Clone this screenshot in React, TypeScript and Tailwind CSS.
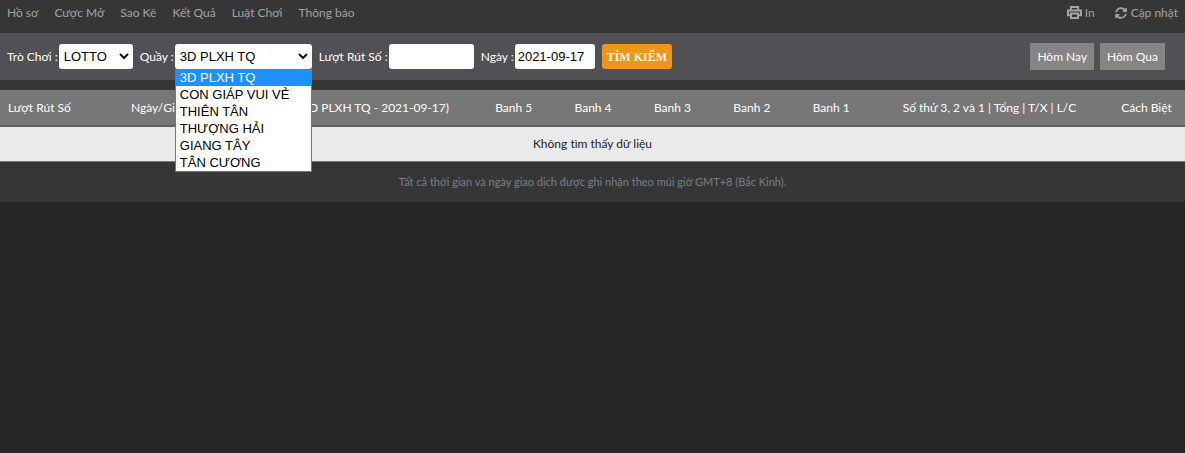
import React, { useState } from 'react';
import { FaSyncAlt } from 'react-icons/fa';
import { clsx } from 'clsx';

const navLinks = ['Hồ sơ', 'Cược Mở', 'Sao Kê', 'Kết Quả', 'Luật Chơi', 'Thông báo'];
const counters = ['3D PLXH TQ', 'CON GIÁP VUI VẺ', 'THIÊN TÂN', 'THƯỢNG HẢI', 'GIANG TÂY', 'TÂN CƯƠNG'];
const balls = ['Banh 5', 'Banh 4', 'Banh 3', 'Banh 2', 'Banh 1'];

const fieldClass = 'rounded-[3px] bg-white text-black font-["Liberation_Sans",sans-serif] text-[13px] h-[25px]';

const Chevron = () => (
  <svg viewBox="0 0 10 7" className="pointer-events-none absolute right-1 top-[9px] h-[7px] w-[10px]" fill="none" stroke="#111" strokeWidth="2">
    <path d="M1 1l4 4 4-4" />
  </svg>
);

const PrinterIcon = () => (
  <svg viewBox="0 0 15 13" className="h-[13px] w-[15px]" fill="none" stroke="currentColor" strokeWidth="2">
    <path d="M3.9 4V1h7.2v3" />
    <path d="M3.5 9.3H1V4.4h13v4.9h-2.5" />
    <path d="M4 7.5h7V12H4z" />
  </svg>
);

const TopNav = () => (
  <nav className="flex h-[33px] items-center justify-between px-[7px] pb-2 text-[#a3a3a3]">
    <div className="flex gap-4">
      {navLinks.map((link) => (
        <a key={link} href="#">{link}</a>
      ))}
    </div>
    <div className="flex gap-5">
      <button className="flex items-center gap-[3px]">
        <PrinterIcon />
        In
      </button>
      <button className="flex items-center gap-1">
        <FaSyncAlt className="h-3 w-3" />
        Cập nhật
      </button>
    </div>
  </nav>
);

const Filters = () => {
  const [counter, setCounter] = useState(counters[0]);
  const [open, setOpen] = useState(true);
  const [date, setDate] = useState('2021-09-17');

  return (
    <div className="flex min-h-[47px] items-center justify-between bg-[#505055] px-[7px] text-white">
      <div className="flex items-center gap-[7px]">
        <div className="flex items-center gap-px">
          <label htmlFor="game">Trò Chơi :</label>
          <div className="relative">
            <select id="game" className={clsx(fieldClass, 'w-[74px] appearance-none pl-[5px]')}>
              <option>LOTTO</option>
            </select>
            <Chevron />
          </div>
        </div>

        <div className="flex items-center gap-px">
          <label htmlFor="counter">Quầy :</label>
          <div className="relative">
            <select
              id="counter"
              value={counter}
              onChange={(e) => setCounter(e.target.value)}
              onClick={() => setOpen(!open)}
              className={clsx(fieldClass, 'w-[137px] appearance-none pl-[5px]')}
            >
              {counters.map((name) => (
                <option key={name}>{name}</option>
              ))}
            </select>
            <Chevron />
            {open && (
              <ul role="listbox" aria-label="Quầy" className="absolute top-full left-0 z-10 w-full border border-t-0 border-[#777] bg-white font-['Liberation_Sans',sans-serif] text-[13px] text-black">
                {counters.map((name) => (
                  <li
                    key={name}
                    role="option"
                    aria-selected={name === counter}
                    onClick={() => { setCounter(name); setOpen(false); }}
                    className={clsx('px-1 leading-[17px]', name === counter && 'bg-[#1e90ff] text-white')}
                  >
                    {name}
                  </li>
                ))}
              </ul>
            )}
          </div>
        </div>

        <div className="flex items-center gap-px">
          <label htmlFor="round">Lượt Rút Số :</label>
          <input id="round" type="text" className={clsx(fieldClass, 'w-[85px] px-1')} />
        </div>

        <div className="flex items-center gap-px">
          <label htmlFor="date">Ngày :</label>
          <input id="date" type="text" value={date} onChange={(e) => setDate(e.target.value)} className={clsx(fieldClass, 'w-20 px-[3px]')} />
        </div>

        <button className="h-[25px] rounded-[3px] bg-[#ee961c] px-[5px] font-['Liberation_Serif',serif] font-bold text-[#fff3d6]">
          TÌM KIẾM
        </button>
      </div>

      <div className="flex gap-1.5 pr-[13px]">
        <button className="h-[27px] bg-[#858585] px-[7px]">Hôm Nay</button>
        <button className="h-[27px] bg-[#858585] px-[7px]">Hôm Qua</button>
      </div>
    </div>
  );
};

const Results = () => (
  <table className="mt-2.5 w-full table-fixed border-collapse">
    <colgroup>
      <col className="w-[6%]" />
      <col className="w-[15%]" />
      <col className="w-[19%]" />
      {balls.map((ball) => (
        <col key={ball} className="w-[6.7%]" />
      ))}
      <col className="w-[20%]" />
      <col className="w-[6.5%]" />
    </colgroup>
    <thead>
      <tr className="h-9 border-b-2 border-[#616161] bg-[#777] whitespace-nowrap text-white *:font-normal">
        <th className="pl-2 text-left">Lượt Rút Số</th>
        <th className="pl-[60px] text-left">Ngày/Giờ</th>
        <th className="pr-[25px] text-right">(3D PLXH TQ - 2021-09-17)</th>
        {balls.map((ball) => (
          <th key={ball}>{ball}</th>
        ))}
        <th>Số thứ 3, 2 và 1 | Tổng | T/X | L/C</th>
        <th>Cách Biệt</th>
      </tr>
    </thead>
    <tbody>
      <tr className="h-[35px] border-b border-[#777] bg-[#eaeaea] text-[#222]">
        <td colSpan={10} className="text-center">Không tìm thấy dữ liệu</td>
      </tr>
    </tbody>
  </table>
);

export default function App() {
  return (
    <div className="min-h-screen bg-[#262626] font-[Lato,sans-serif] text-xs [font-variant-ligatures:none]">
      <div className="bg-[#363636]">
        <TopNav />
        <Filters />
        <Results />
        <p className="py-3 text-center text-[11px] leading-4 text-[#75808c]">
          Tất cả thời gian và ngày giao dịch được ghi nhận theo múi giờ GMT+8 (Bắc Kinh).
        </p>
      </div>
    </div>
  );
}
